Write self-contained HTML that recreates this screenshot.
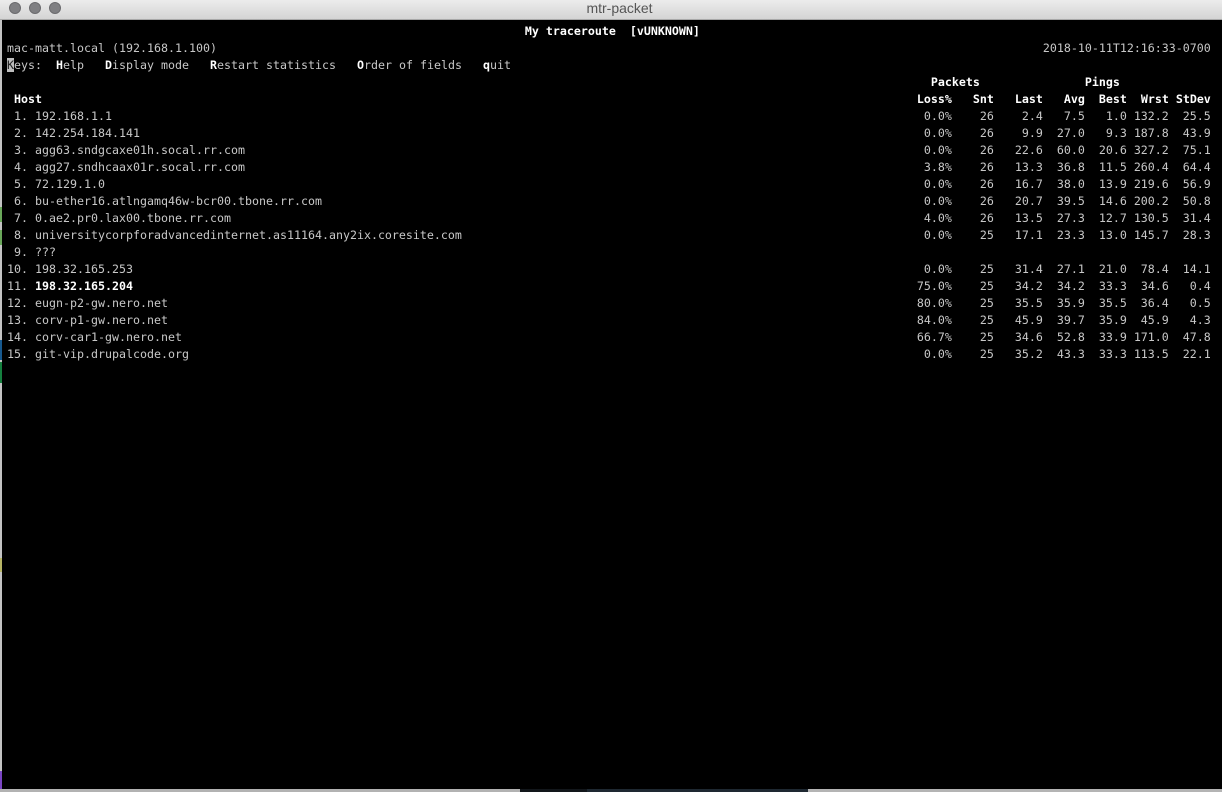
<!DOCTYPE html>
<html><head><meta charset="utf-8"><style>
html,body{margin:0;padding:0;background:#000;width:1222px;height:792px;overflow:hidden}
#bar{position:absolute;left:0;top:0;width:1222px;height:19px;background:linear-gradient(#ececec,#d4d4d4);border-bottom:1px solid #a8a8a8;box-sizing:content-box}
.dot{position:absolute;top:2px;width:12px;height:12px;border-radius:50%;background:#7f7f82;border:.5px solid #6b6b6e;box-sizing:border-box}
#ttl{position:absolute;left:0;width:1239px;top:0;text-align:center;font:14px/16px "Liberation Sans",sans-serif;color:#555}
#term{position:absolute;left:2px;top:20px;width:1220px;height:769px;background:#000}
pre{position:absolute;left:7px;top:22.5px;margin:0;font:11.63px/17px "DejaVu Sans Mono",monospace;color:#c8c8c8;white-space:pre}
b{color:#fff;font-weight:bold}
.cur{background:#bdbdbd;color:#222;font-weight:normal}
.s{position:absolute;left:0;width:2px;background:#c3c3c3}
.b{position:absolute;top:789px;height:3px}
</style></head><body>
<div id="bar"><i class="dot" style="left:9px"></i><i class="dot" style="left:29px"></i><i class="dot" style="left:49px"></i><div id="ttl">mtr-packet</div></div>
<div id="term"></div>
<div class="s" style="top:20px;height:769px"></div>
<div class="s" style="top:207px;height:15px;background:#6aa85a"></div>
<div class="s" style="top:230px;height:15px;background:#6aa85a"></div>
<div class="s" style="top:340px;height:20px;background:#17598f"></div>
<div class="s" style="top:362px;height:21px;background:#15803f"></div>
<div class="s" style="top:558px;height:14px;background:#b8b566"></div>
<div class="s" style="top:771px;height:18px;background:#7a45c4"></div>
<div class="b" style="left:0;width:520px;background:#b2b2b2"></div>
<div class="b" style="left:520px;width:67px;background:#12161a"></div>
<div class="b" style="left:587px;width:221px;background:#1e2831"></div>
<div class="b" style="left:808px;width:414px;background:#b4b4b4"></div>
<pre>                                                                          <b>My traceroute  [vUNKNOWN]</b>
mac-matt.local (192.168.1.100)                                                                                                                      2018-10-11T12:16:33-0700
<span class="cur">K</span>eys:  <b>H</b>elp   <b>D</b>isplay mode   <b>R</b>estart statistics   <b>O</b>rder of fields   <b>q</b>uit
                                                                                                                                    <b>Packets</b>               <b>Pings</b>
 <b>Host</b>                                                                                                                             <b>Loss%   Snt   Last   Avg  Best  Wrst StDev</b>
 1. 192.168.1.1                                                                                                                    0.0%    26    2.4   7.5   1.0 132.2  25.5
 2. 142.254.184.141                                                                                                                0.0%    26    9.9  27.0   9.3 187.8  43.9
 3. agg63.sndgcaxe01h.socal.rr.com                                                                                                 0.0%    26   22.6  60.0  20.6 327.2  75.1
 4. agg27.sndhcaax01r.socal.rr.com                                                                                                 3.8%    26   13.3  36.8  11.5 260.4  64.4
 5. 72.129.1.0                                                                                                                     0.0%    26   16.7  38.0  13.9 219.6  56.9
 6. bu-ether16.atlngamq46w-bcr00.tbone.rr.com                                                                                      0.0%    26   20.7  39.5  14.6 200.2  50.8
 7. 0.ae2.pr0.lax00.tbone.rr.com                                                                                                   4.0%    26   13.5  27.3  12.7 130.5  31.4
 8. universitycorpforadvancedinternet.as11164.any2ix.coresite.com                                                                  0.0%    25   17.1  23.3  13.0 145.7  28.3
 9. ???
10. 198.32.165.253                                                                                                                 0.0%    25   31.4  27.1  21.0  78.4  14.1
11. <b>198.32.165.204</b>                                                                                                                75.0%    25   34.2  34.2  33.3  34.6   0.4
12. eugn-p2-gw.nero.net                                                                                                           80.0%    25   35.5  35.9  35.5  36.4   0.5
13. corv-p1-gw.nero.net                                                                                                           84.0%    25   45.9  39.7  35.9  45.9   4.3
14. corv-car1-gw.nero.net                                                                                                         66.7%    25   34.6  52.8  33.9 171.0  47.8
15. git-vip.drupalcode.org                                                                                                         0.0%    25   35.2  43.3  33.3 113.5  22.1</pre>
</body></html>
